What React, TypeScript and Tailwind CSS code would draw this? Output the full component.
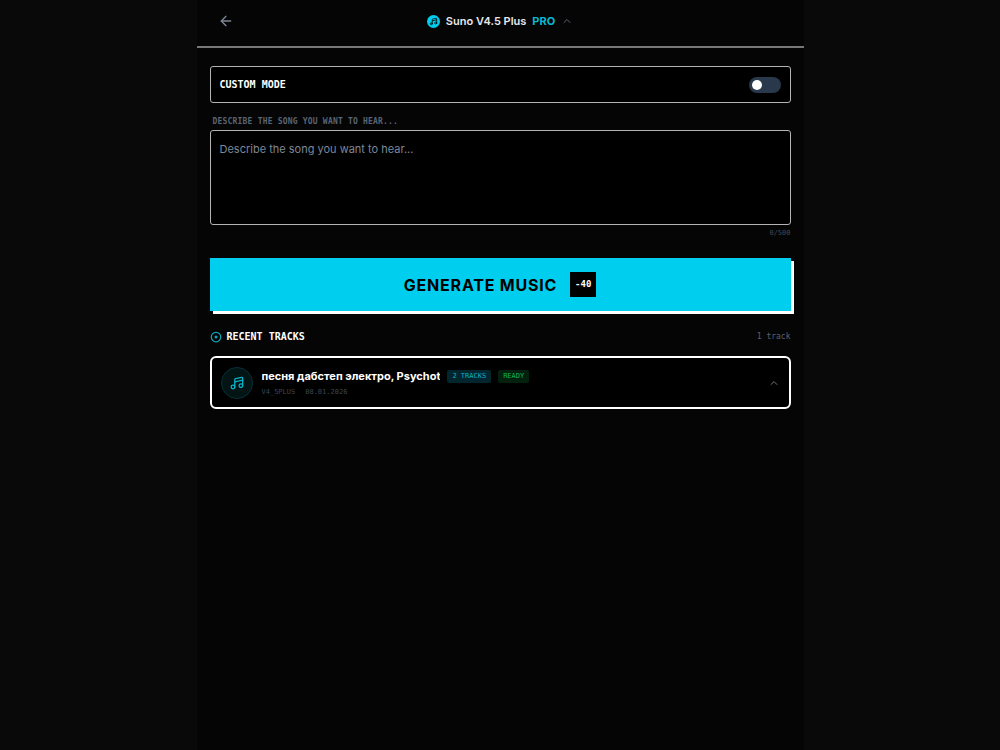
import React, { useState } from 'react';
import { ArrowLeft, ChevronUp } from 'lucide-react';

interface Track {
  id: number;
  title: string;
  count: string;
  status: string;
  model: string;
  date: string;
}

const MAX_LENGTH = 500;

const tracks: Track[] = [
  { id: 1, title: 'песня дабстеп электро, Psychot', count: '2 TRACKS', status: 'READY', model: 'V4_5PLUS', date: '08.01.2026' },
];

function NoteIcon({ className }: { className: string }) {
  return (
    <svg
      viewBox="0 0 24 24"
      fill="none"
      stroke="currentColor"
      strokeWidth="2"
      strokeLinecap="round"
      strokeLinejoin="round"
      aria-hidden="true"
      className={className}
    >
      <circle cx="6" cy="18" r="2.7" />
      <circle cx="17.8" cy="16" r="2.7" />
      <path d="M8.7 18V6.8c0-.7.4-1.2 1.1-1.4l9-1.9c1-.2 1.7.4 1.7 1.3V16" />
      <path d="M8.7 10.2l11.8-2.6" />
    </svg>
  );
}

function RecordIcon({ className }: { className: string }) {
  return (
    <svg viewBox="0 0 24 24" fill="none" stroke="currentColor" strokeWidth="2.5" aria-hidden="true" className={className}>
      <circle cx="12" cy="12" r="9.5" />
      <circle cx="12" cy="12" r="3" fill="currentColor" stroke="none" />
    </svg>
  );
}

function Header() {
  return (
    <header className="grid grid-cols-[1fr_auto_1fr] items-center h-12 px-5 pb-1 border-b-2 border-[#777777]">
      <button type="button" aria-label="Back" className="justify-self-start p-px text-[#7c8798] cursor-pointer">
        <ArrowLeft className="w-4 h-4" strokeWidth={2} />
      </button>
      <button type="button" className="flex items-center h-4 text-[11px] leading-4 font-semibold text-gray-200 cursor-pointer">
        <span className="w-[13px] h-[13px] mr-1.5 rounded-full bg-[#00ceee] text-black flex items-center justify-center">
          <NoteIcon className="w-[9px] h-[9px]" />
        </span>
        <span>Suno V4.5 Plus</span>
        <span className="ml-1.5 font-bold text-[#08b8d2]">PRO</span>
        <ChevronUp className="w-3 h-3 ml-1.5 text-[#5a616d]" />
      </button>
    </header>
  );
}

function TrackCard({ track }: { track: Track }) {
  return (
    <button
      type="button"
      className="w-full h-[53px] px-[9px] flex items-center text-left bg-black border-2 border-white rounded-md cursor-pointer"
    >
      <span className="w-8 h-8 shrink-0 rounded-full bg-[#021414] border border-[#063137] text-[#08b0c8] flex items-center justify-center">
        <NoteIcon className="w-4 h-4" />
      </span>
      <span className="flex-1 min-w-0 ml-[9px]">
        <span className="flex items-center gap-[7px] h-4">
          <span className="text-[11px] leading-4 font-bold text-white truncate">{track.title}</span>
          <span className="px-[5px] h-[13px] rounded-xs bg-[#03252e] text-[#08b0c8] font-['DejaVu_Sans_Mono',monospace] text-[7px] leading-[13px]">
            {track.count}
          </span>
          <span className="px-[5px] h-[13px] rounded-xs bg-[#04200f] text-[#12b350] font-['DejaVu_Sans_Mono',monospace] text-[7px] leading-[13px]">
            {track.status}
          </span>
        </span>
        <span className="flex gap-2.5 mt-[3px] font-['DejaVu_Sans_Mono',monospace] text-[7px] leading-[10px] text-[#3d4653]">
          <span>{track.model}</span>
          <span>{track.date}</span>
        </span>
      </span>
      <ChevronUp className="w-3 h-3 shrink-0 text-[#6b7280]" />
    </button>
  );
}

export default function App() {
  const [customMode, setCustomMode] = useState(false);
  const [prompt, setPrompt] = useState('');

  return (
    <div className="min-h-screen bg-[#090909] text-white font-['Inter',sans-serif]">
      <div className="w-full max-w-[607px] min-h-screen mx-auto bg-[#050505]">
        <Header />

        <main className="px-[13px] pt-[18px]">
          {/* Custom mode switch */}
          <label className="flex items-center justify-between h-[37px] px-[9px] bg-black border border-[#b4b4b4] rounded-[3px] cursor-pointer">
            <span className="font-['DejaVu_Sans_Mono',monospace] text-[10px] font-bold">CUSTOM MODE</span>
            <input
              type="checkbox"
              role="switch"
              checked={customMode}
              onChange={(e) => setCustomMode(e.target.checked)}
              className="appearance-none w-8 h-4 px-[3px] flex items-center rounded-full bg-[#29384a] checked:bg-[#00ceee] checked:justify-end before:content-[''] before:w-[10px] before:h-[10px] before:rounded-full before:bg-white"
            />
          </label>

          {/* Song description */}
          <label
            htmlFor="prompt"
            className="block mt-[13px] px-[3px] font-['DejaVu_Sans_Mono',monospace] text-[8px] leading-3 font-bold tracking-wide text-[#596474]"
          >
            DESCRIBE THE SONG YOU WANT TO HEAR...
          </label>
          <textarea
            id="prompt"
            value={prompt}
            maxLength={MAX_LENGTH}
            onChange={(e) => setPrompt(e.target.value)}
            placeholder="Describe the song you want to hear..."
            className="block w-full h-[95px] mt-0.5 px-[9px] py-[10px] bg-black border border-[#b4b4b4] rounded-[3px] resize-none outline-none text-[11px] leading-4 placeholder:text-[#7c8798]"
          />
          <p className="mt-[3px] text-right font-['DejaVu_Sans_Mono',monospace] text-[7px] leading-[10px] text-[#414854]">
            {prompt.length}/{MAX_LENGTH}
          </p>

          <button
            type="button"
            className="w-full h-[53px] mt-5 flex items-center justify-center gap-[13px] bg-[#00ceee] text-black shadow-[3px_3px_0_0_#ffffff] cursor-pointer"
          >
            <span className="text-[16px] leading-6 font-bold tracking-wider">GENERATE MUSIC</span>
            <span className="w-[26px] h-[25px] flex items-center justify-center bg-black text-white font-['DejaVu_Sans_Mono',monospace] text-[9px] font-bold">
              -40
            </span>
          </button>

          {/* Recent tracks */}
          <section className="mt-[18px]">
            <div className="flex items-center justify-between h-4">
              <h2 className="flex items-center gap-[5px] font-['DejaVu_Sans_Mono',monospace] text-[10px] leading-4 font-bold">
                <RecordIcon className="w-3 h-3 text-[#08a5bc]" />
                RECENT TRACKS
              </h2>
              <span className="font-['DejaVu_Sans_Mono',monospace] text-[8px] text-[#596170]">{tracks.length} track</span>
            </div>
            <div className="mt-[11px] space-y-2">
              {tracks.map((track) => (
                <TrackCard key={track.id} track={track} />
              ))}
            </div>
          </section>
        </main>
      </div>
    </div>
  );
}
